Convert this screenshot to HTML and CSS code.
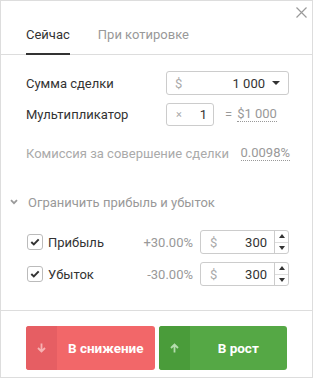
FILE: index.html
```html
<!DOCTYPE html>
<html lang="ru">
<head>
    <meta charset="UTF-8">
    <meta name="viewport" content="width=device-width, initial-scale=1.0">
    <title>Сделка</title>
    <link rel="stylesheet" href="styles.css">
</head>
<body>
    <div class="panel">
        <svg class="close" width="11" height="11" viewBox="0 0 11 11"><path d="M0.5 0.5L10.5 10.5M10.5 0.5L0.5 10.5" stroke="#9a9a9a" stroke-width="1.2" fill="none"/></svg>

        <div class="tabs">
            <div class="tab active">Сейчас</div>
            <div class="tab">При котировке</div>
        </div>

        <div class="body">
            <div class="row">
                <div class="label">Сумма сделки</div>
                <div class="field select">
                    <span class="cur">$</span>
                    <span class="val">1 000</span>
                    <span class="caret"></span>
                </div>
            </div>
            <div class="row row-mult">
                <div class="label">Мультипликатор</div>
                <div class="field mult">
                    <span class="times">×</span>
                    <span class="val">1</span>
                </div>
                <span class="eq">=</span>
                <span class="dotted">$1 000</span>
            </div>
            <div class="row row-fee">
                <div class="fee">Комиссия за совершение сделки</div>
                <span class="dotted fee-val">0.0098%</span>
            </div>
        </div>

        <div class="limit">
            <svg class="chev" width="8" height="6" viewBox="0 0 8 6"><path d="M1 1.2L4 4.2L7 1.2" stroke="#9a9a9a" stroke-width="1.8" fill="none"/></svg>
            <span>Ограничить прибыль и убыток</span>
        </div>

        <div class="limits">
            <div class="crow">
                <span class="check"><svg width="10" height="8" viewBox="0 0 10 8"><path d="M1.3 4L3.8 6.4L8.7 1.4" stroke="#333" stroke-width="2" fill="none"/></svg></span>
                <span class="clabel">Прибыль</span>
                <span class="pct">+30.00%</span>
                <div class="field spin">
                    <span class="cur">$</span>
                    <span class="val">300</span>
                    <span class="arrows"><i class="up"></i><i class="down"></i></span>
                </div>
            </div>
            <div class="crow">
                <span class="check"><svg width="10" height="8" viewBox="0 0 10 8"><path d="M1.3 4L3.8 6.4L8.7 1.4" stroke="#333" stroke-width="2" fill="none"/></svg></span>
                <span class="clabel">Убыток</span>
                <span class="pct">-30.00%</span>
                <div class="field spin">
                    <span class="cur">$</span>
                    <span class="val">300</span>
                    <span class="arrows"><i class="up"></i><i class="down"></i></span>
                </div>
            </div>
        </div>

        <div class="footer">
            <button class="btn sell">
                <span class="ico"><svg width="9" height="10" viewBox="0 0 9 10"><path d="M4.5 0.5V8.5M1 5L4.5 8.5L8 5" stroke="#f7b3b3" stroke-width="1.8" fill="none"/></svg></span>
                <span class="txt">В снижение</span>
            </button>
            <button class="btn buy">
                <span class="ico"><svg width="9" height="10" viewBox="0 0 9 10"><path d="M4.5 9.5V1.5M1 5L4.5 1.5L8 5" stroke="#b5dcae" stroke-width="1.8" fill="none"/></svg></span>
                <span class="txt">В рост</span>
            </button>
        </div>
    </div>
</body>
</html>
```

FILE: styles.css
```css
* { margin: 0; padding: 0; box-sizing: border-box; }
body { font-family: Roboto, "Liberation Sans", sans-serif; font-size: 13px; color: #333; background: #fff; }

.panel { position: relative; width: 313px; height: 378px; border: 1px solid #ddd; display: flex; flex-direction: column; }
.close { position: absolute; top: 6px; right: 5px; }

.tabs { display: flex; height: 54px; padding-left: 25px; border-bottom: 1px solid #ddd; align-items: flex-end; }
.tab { line-height: 16px; padding-bottom: 10px; color: #999; margin-right: 28px; margin-bottom: -1px; border-bottom: 2px solid transparent; }
.tab.active { color: #333; border-bottom-color: #333; }

.body { padding: 16px 23px 0 25px; }
.row { display: flex; align-items: center; height: 24px; }
.row-mult { margin-top: 7px; }
.row-fee { margin-top: 17px; height: 20px; }
.label { width: 140px; }

.field { display: flex; align-items: center; height: 24px; border: 1px solid #ccc; border-radius: 3px; padding: 0 8px; }
.cur { color: #aaa; }
.val { margin-left: auto; color: #333; }
.select { width: 123px; }
.caret { width: 0; height: 0; border-left: 4px solid transparent; border-right: 4px solid transparent; border-top: 4px solid #333; margin-left: 7px; }
.mult { width: 48px; height: 23px; padding: 0 6px 0 9px; }
.times { color: #aaa; font-size: 11px; }
.eq { color: #999; margin: 0 5px 0 11px; }
.dotted { color: #999; border-bottom: 1px dotted #999; line-height: 15px; }
.fee { color: #aaa; }
.fee-val { margin-left: auto; margin-right: -1px; }

.limit { display: flex; align-items: center; margin-top: 29px; padding-left: 9px; color: #999; height: 20px; }
.chev { margin-right: 10px; }

.limits { padding: 18px 23px 0 26px; }
.crow { display: flex; align-items: center; height: 24px; margin-bottom: 8px; }
.check { width: 16px; height: 16px; border: 1px solid #bbb; border-radius: 3px; display: flex; align-items: center; justify-content: center; }
.clabel { margin-left: 5px; }
.pct { margin-left: auto; color: #999; margin-right: 7px; }
.spin { width: 89px; padding: 0 0 0 9px; }
.spin .val { margin-right: 7px; }
.arrows { display: flex; flex-direction: column; width: 14px; height: 22px; border-left: 1px solid #ccc; }
.arrows i { flex: 1; display: flex; align-items: center; justify-content: center; }
.arrows i::before { content: ""; border-left: 3px solid transparent; border-right: 3px solid transparent; }
.arrows .up { border-bottom: 1px solid #ddd; }
.arrows .up::before { border-bottom: 4px solid #333; }
.arrows .down::before { border-top: 4px solid #333; }

.footer { margin-top: auto; border-top: 1px solid #ddd; padding: 15px 25px 7px 25px; display: flex; gap: 4px; }
.btn { flex: 1; display: flex; height: 44px; border: 0; border-radius: 3px; overflow: hidden; color: #fff; font-family: inherit; font-size: 13.5px; font-weight: bold; cursor: pointer; }
.ico { width: 31px; display: flex; align-items: center; justify-content: center; }
.txt { flex: 1; display: flex; align-items: center; justify-content: center; }
.sell { background: #f26769; }
.sell .ico { background: #e65e63; }
.buy { background: #55a845; }
.buy .ico { background: #4a9c3a; }
```
